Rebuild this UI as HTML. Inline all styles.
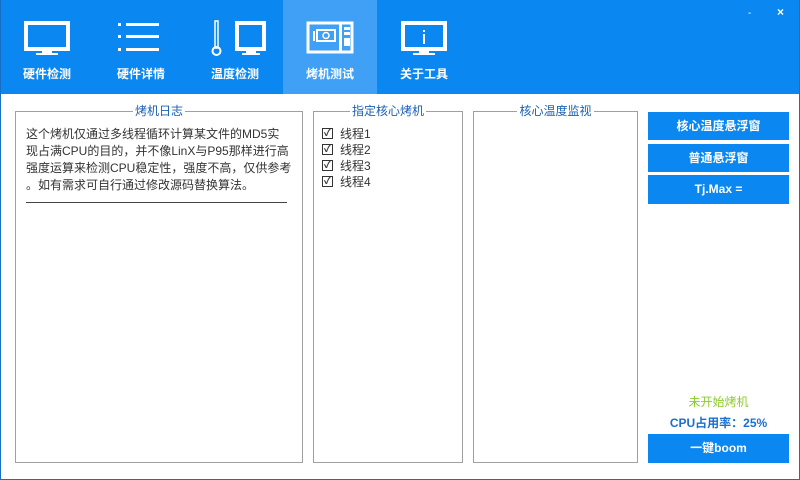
<!DOCTYPE html>
<html><head><meta charset="utf-8"><style>
*{margin:0;padding:0;box-sizing:border-box}
body{width:800px;height:480px;overflow:hidden;background:#fff;font-family:"Liberation Sans","Noto Sans CJK SC",sans-serif;position:relative}
.frame{position:absolute;left:0;top:0;width:800px;height:480px;border:1px solid #1a6fc4;border-top:none}
.hdr{position:absolute;left:0;top:0;width:800px;height:94px;background:#0a87f0}
.tab{position:absolute;top:0;width:94px;height:94px;color:#fff;font-size:12px;font-weight:bold;text-align:center}
.tab svg{position:absolute;left:22px;top:20px}
.tab span{position:absolute;left:0;right:0;top:65px}
.act{background:#3fa0f6}
.gb{position:absolute;border:1px solid #a0a0a0;top:111px;height:352px}
.gb .t{position:absolute;top:-9px;left:0;right:0;text-align:center;font-size:12px;color:#1a5fb4;line-height:16px}
.gb .t b{font-weight:normal;background:#fff;padding:0 2px}
.btn{position:absolute;left:648px;width:141px;background:#0a87f0;color:#fff;font-weight:bold;font-size:12px;text-align:center}
.cb{display:flex;align-items:center;font-size:12px;color:#333;height:16px}
.cb i{display:inline-block;width:11px;height:11px;border:1px solid #333;margin-right:7px;position:relative;font-style:normal;font-size:10px;line-height:9px;text-align:center;font-weight:bold}
</style></head><body>
<div class="hdr">
<div class="tab" style="left:0"><svg width="50" height="40"><rect x="4" y="3" width="42" height="26" fill="none" stroke="#fff" stroke-width="4"/><rect x="20" y="30" width="10" height="3" fill="#fff"/><rect x="14" y="33" width="22" height="2" fill="#fff"/></svg><span>硬件检测</span></div>
<div class="tab" style="left:94px"><svg width="50" height="40"><g fill="#fff"><rect x="2" y="3" width="3" height="3"/><rect x="10" y="3" width="33" height="3"/><rect x="2" y="15" width="3" height="3"/><rect x="10" y="15" width="33" height="3"/><rect x="2" y="28" width="3" height="3"/><rect x="10" y="28" width="33" height="3"/></g></svg><span>硬件详情</span></div>
<div class="tab" style="left:188px"><svg width="60" height="40"><rect x="27" y="3" width="27" height="26" fill="none" stroke="#fff" stroke-width="4"/><rect x="36" y="30" width="10" height="3" fill="#fff"/><rect x="32" y="33" width="18" height="2" fill="#fff"/><rect x="5" y="1" width="3" height="27" fill="none" stroke="#fff" stroke-width="1.5"/><circle cx="6.5" cy="31" r="4" fill="none" stroke="#fff" stroke-width="2"/></svg><span>温度检测</span></div>
<div class="tab act" style="left:283px"><svg width="50" height="40"><rect x="3" y="3" width="44" height="29" fill="none" stroke="#fff" stroke-width="3"/><rect x="34" y="3" width="3" height="29" fill="#fff"/><rect x="8" y="11" width="2" height="10" fill="#fff"/><rect x="12" y="10" width="18" height="11" fill="none" stroke="#fff" stroke-width="2"/><circle cx="21" cy="15.5" r="3" fill="none" stroke="#fff" stroke-width="1.5"/><rect x="39" y="7" width="6" height="3" fill="#fff"/><rect x="39" y="12" width="6" height="3" fill="#fff"/><rect x="39" y="18" width="6" height="8" fill="#fff"/></svg><span>烤机测试</span></div>
<div class="tab" style="left:377px"><svg width="50" height="40"><rect x="4" y="3" width="42" height="26" fill="none" stroke="#fff" stroke-width="4"/><rect x="20" y="30" width="10" height="3" fill="#fff"/><rect x="14" y="33" width="22" height="2" fill="#fff"/><rect x="24" y="10" width="2" height="2" fill="#fff"/><rect x="24" y="14" width="2" height="10" fill="#fff"/></svg><span>关于工具</span></div>
<div style="position:absolute;left:748px;top:8px;color:#fff;font-size:10px">-</div>
<div style="position:absolute;left:777px;top:5px;color:#fff;font-size:12px;font-weight:bold">×</div>
</div>
<div class="gb" style="left:15px;width:288px"><div class="t"><b>烤机日志</b></div>
<div style="position:absolute;left:10px;top:14px;width:275px;font-size:12px;line-height:17px;color:#333;white-space:nowrap">这个烤机仅通过多线程循环计算某文件的MD5实<br>现占满CPU的目的，并不像LinX与P95那样进行高<br>强度运算来检测CPU稳定性，强度不高，仅供参考<br>。如有需求可自行通过修改源码替换算法。</div>
<div style="position:absolute;left:10px;top:90px;width:261px;border-top:1px solid #444"></div>
</div>
<div class="gb" style="left:313px;width:150px"><div class="t"><b>指定核心烤机</b></div>
<div style="position:absolute;left:8px;top:13px">
<div class="cb"><i>✓</i>线程1</div><div class="cb"><i>✓</i>线程2</div><div class="cb"><i>✓</i>线程3</div><div class="cb"><i>✓</i>线程4</div></div>
</div>
<div class="gb" style="left:473px;width:165px"><div class="t"><b>核心温度监视</b></div></div>
<div class="btn" style="top:112px;height:28px;line-height:28px">核心温度悬浮窗</div>
<div class="btn" style="top:144px;height:28px;line-height:28px">普通悬浮窗</div>
<div class="btn" style="top:175px;height:29px;line-height:29px">Tj.Max =</div>
<div style="position:absolute;left:648px;width:141px;top:393px;text-align:center;font-size:12px;color:#8ccc2a">未开始烤机</div>
<div style="position:absolute;left:648px;width:141px;top:414px;text-align:center;font-size:12px;color:#1a6fd0;font-weight:bold">CPU占用率：25%</div>
<div class="btn" style="top:434px;height:29px;line-height:29px">一键boom</div>
<div class="frame"></div>
</body></html>
